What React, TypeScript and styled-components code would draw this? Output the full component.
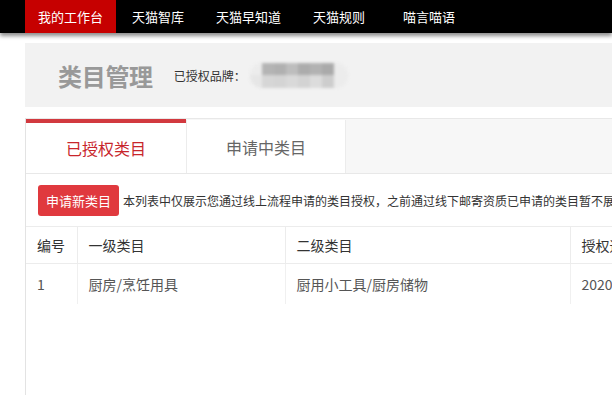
import styled, { createGlobalStyle } from 'styled-components';

const GlobalStyle = createGlobalStyle`
  html, body {
    margin: 0;
    padding: 0;
    background: #fff;
    overflow: hidden;
  }
  body {
    font-family: "Noto Sans CJK SC", "Liberation Sans", sans-serif;
    color: #333;
  }
`;

const TopNav = styled.div`
  display: flex;
  height: 33px;
  background: #000;
  padding-left: 25px;
  box-shadow: 0 3px 4px rgba(0, 0, 0, 0.45);
  position: relative;
  z-index: 1;
`;

const NavItem = styled.div<{ $active?: boolean; $gap?: number }>`
  display: flex;
  align-items: center;
  padding: 0 ${(p) => (p.$active ? '13px' : '16px')};
  margin-left: ${(p) => p.$gap ?? 0}px;
  font-size: 13px;
  color: #fff;
  background: ${(p) => (p.$active ? '#c60000' : 'transparent')};
  white-space: nowrap;
`;

const Main = styled.div`
  margin-left: 25px;
  width: 1100px;
  padding-top: 10px;
`;

const TitlePanel = styled.div`
  display: flex;
  align-items: center;
  height: 64px;
  background: #f2f2f2;
  padding-left: 33px;
`;

const PageTitle = styled.h1`
  margin: 0 21px 0 0;
  font-size: 24px;
  font-weight: 700;
  color: #999;
  letter-spacing: -0.3px;
`;

const BrandLabel = styled.span`
  font-size: 12px;
  color: #333;
`;

const Mosaic = styled.div`
  display: grid;
  grid-template-columns: repeat(8, 12px);
  grid-template-rows: 12px 13px;
  width: 98px;
  height: 25px;
  border-radius: 12px;
  background: #ebebeb;
  overflow: hidden;
  filter: blur(1.4px);
  margin-left: 4px;
`;

const Tile = styled.div<{ $c: string }>`
  background: ${(p) => p.$c};
`;

const Card = styled.div`
  margin-top: 11px;
  border-left: 1px solid #e3e3e3;
  min-height: 300px;
`;

const TabBar = styled.div`
  display: flex;
  background: #f7f7f7;
  border-top: 1px solid #e8e8e8;
  border-bottom: 1px solid #e8e8e8;
  height: 54px;
`;

const Tab = styled.div<{ $active?: boolean }>`
  width: 160px;
  display: flex;
  align-items: center;
  justify-content: center;
  background: #fff;
  font-size: 16px;
  color: ${(p) => (p.$active ? '#c8262b' : '#666')};
  border-top: ${(p) => (p.$active ? '4px solid #d2393f' : '0')};
  margin-top: ${(p) => (p.$active ? '0' : '1px')};
  border-left: ${(p) => (p.$active ? '0' : '1px solid #ececec')};
  border-right: ${(p) => (p.$active ? '0' : '1px solid #ececec')};
  box-sizing: border-box;
`;

const Toolbar = styled.div`
  display: flex;
  align-items: center;
  padding: 11px 12px 10px;
  white-space: nowrap;
`;

const RedButton = styled.button`
  width: 81px;
  height: 31px;
  padding: 0;
  border: none;
  border-radius: 3px;
  background: #e0393e;
  color: #fff;
  font-family: inherit;
  font-size: 13px;
  margin-right: 4px;
`;

const Note = styled.span`
  font-size: 12px;
  color: #333;
`;

const Table = styled.table`
  border-collapse: collapse;
  font-size: 14px;
  white-space: nowrap;
`;

const Th = styled.th<{ $w: number }>`
  width: ${(p) => p.$w}px;
  height: 37px;
  padding: 0 11px;
  text-align: left;
  font-weight: 400;
  color: #333;
  border-top: 1px solid #ececec;
  border-bottom: 1px solid #ececec;
  border-left: 1px solid #ececec;
  box-sizing: border-box;
  &:first-child {
    border-left: 0;
  }
`;

const Td = styled.td`
  height: 40px;
  padding: 0 11px;
  color: #555;
  border-left: 1px solid #f0f0f0;
  &:first-child {
    border-left: 0;
  }
`;

const tiles = [
  '#ececec', '#b4b4b4', '#b0b0b0', '#bdbdbd', '#acacac', '#b2b2b2', '#aaaaaa', '#ececec',
  '#e6e6e6', '#d6d6d6', '#d4d4d4', '#d9d9d9', '#d3d3d3', '#dcdcdc', '#cdcdcd', '#ececec',
];

export default function App() {
  return (
    <>
      <GlobalStyle />
      <TopNav>
        <NavItem $active>我的工作台</NavItem>
        <NavItem>天猫智库</NavItem>
        <NavItem>天猫早知道</NavItem>
        <NavItem>天猫规则</NavItem>
        <NavItem $gap={6}>喵言喵语</NavItem>
      </TopNav>

      <Main>
        <TitlePanel>
          <PageTitle>类目管理</PageTitle>
          <BrandLabel>已授权品牌：</BrandLabel>
          <Mosaic>
            {tiles.map((c, i) => (
              <Tile key={i} $c={c} />
            ))}
          </Mosaic>
        </TitlePanel>

        <Card>
          <TabBar>
            <Tab $active>已授权类目</Tab>
            <Tab>申请中类目</Tab>
          </TabBar>

          <Toolbar>
            <RedButton>申请新类目</RedButton>
            <Note>
              本列表中仅展示您通过线上流程申请的类目授权，之前通过线下邮寄资质已申请的类目暂不展示
            </Note>
          </Toolbar>

          <Table>
            <thead>
              <tr>
                <Th $w={51}>编号</Th>
                <Th $w={208}>一级类目</Th>
                <Th $w={285}>二级类目</Th>
                <Th $w={200}>授权通过时间</Th>
              </tr>
            </thead>
            <tbody>
              <tr>
                <Td>1</Td>
                <Td>厨房/烹饪用具</Td>
                <Td>厨用小工具/厨房储物</Td>
                <Td>2020-05-12</Td>
              </tr>
            </tbody>
          </Table>
        </Card>
      </Main>
    </>
  );
}
